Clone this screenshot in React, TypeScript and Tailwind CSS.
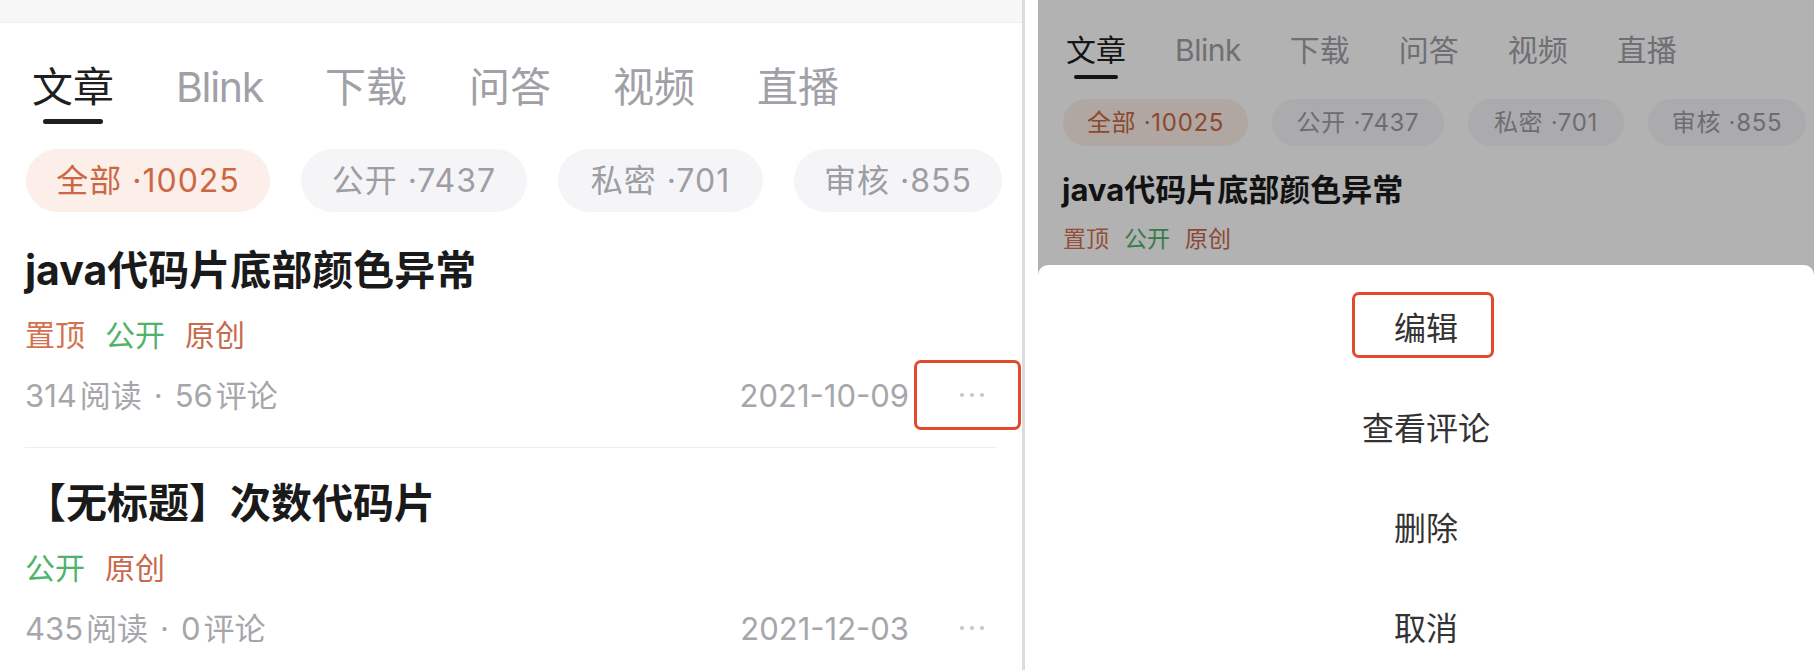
const font = "font-['Inter','Noto_Sans_CJK_SC',sans-serif]";

const tabs = ["文章", "Blink", "下载", "问答", "视频", "直播"];

const chips = [
  { label: "全部 ·10025", big: "w-[244px]", small: "w-[185px]", active: true },
  { label: "公开 ·7437", big: "w-[226px]", small: "w-[172px]", active: false },
  { label: "私密 ·701", big: "w-[205px]", small: "w-[156px]", active: false },
  { label: "审核 ·855", big: "w-[208px]", small: "w-[158px]", active: false },
];

const tagColor: Record<string, string> = {
  置顶: "text-[#d4714f]",
  公开: "text-[#4fb36a]",
  原创: "text-[#c8694d]",
};

const articles = [
  { title: "java代码片底部颜色异常", tags: ["置顶", "公开", "原创"], reads: 314, comments: 56, date: "2021-10-09", marked: true },
  { title: "【无标题】次数代码片", tags: ["公开", "原创"], reads: 435, comments: 0, date: "2021-12-03", marked: false },
];

const sheetItems = ["编辑", "查看评论", "删除", "取消"];

function Dots() {
  return (
    <div className="flex items-center gap-[6px]">
      <span className="w-[4px] h-[4px] rounded-full bg-[#c6c6cb]" />
      <span className="w-[4px] h-[4px] rounded-full bg-[#c6c6cb]" />
      <span className="w-[4px] h-[4px] rounded-full bg-[#c6c6cb]" />
    </div>
  );
}

function LeftPanel() {
  return (
    <div className="w-[1025px] h-full shrink-0 bg-white border-r-[3px] border-[#dcdcdc] flex flex-col">
      <div className="h-[23px] bg-[#f7f7f7] border-b border-[#efefef]" />

      {/* tabs */}
      <div className="mt-[44px] flex items-start gap-[62px] pl-[32px]">
        {tabs.map((t, i) => (
          <div key={t} className="flex flex-col items-center">
            <span className={`text-[41px] leading-none ${i === 1 ? "tracking-[-1.3px]" : ""} ${i === 0 ? "text-[#1f1f1f]" : "text-[#a0a0a6]"}`}>{t}</span>
            {i === 0 && <span className="mt-[11px] h-[5px] w-[60px] rounded-full bg-[#1f1f1f]" />}
          </div>
        ))}
      </div>

      {/* filter chips */}
      <div className="mt-[25px] flex gap-[31px] pl-[26px]">
        {chips.map((c) => (
          <div key={c.label}
            className={`${c.big} h-[63px] rounded-full flex items-center justify-center text-[32px] leading-none tracking-[1px] ${c.active ? "bg-[#fcefea] text-[#cb6843]" : "bg-[#f5f5f8] text-[#9d9da3]"}`}>
            {c.label}
          </div>
        ))}
      </div>

      {/* articles */}
      <div className="px-[25px] flex flex-col">
        {articles.map((a, i) => (
          <div key={a.title} className="flex flex-col">
            {i > 0 && <div className="mt-[37px] h-px bg-[#eeeeee]" />}
            <div className={`${i === 0 ? "mt-[38px]" : "mt-[35px]"} text-[41px] leading-none font-bold text-[#1a1a1a]`}>{a.title}</div>
            <div className="mt-[29px] flex gap-[20px] text-[30px] leading-none">
              {a.tags.map((t) => <span key={t} className={tagColor[t]}>{t}</span>)}
            </div>
            <div className="mt-[30px] h-[30px] flex items-center justify-between text-[31px] leading-none text-[#a6a6ab]">
              <span className="flex items-center">
                <span>{a.reads}</span>
                <span className="ml-[3px]">阅读</span>
                <span className="mx-[12px]">·</span>
                <span>{a.comments}</span>
                <span className="ml-[3px]">评论</span>
              </span>
              <div className="flex items-center">
                <span>{a.date}</span>
                <div className="relative ml-[51px] mr-[13px] h-[30px] flex items-center">
                  <Dots />
                  {a.marked && (
                    <div className="absolute left-[-46px] top-[-20px] w-[107px] h-[70px] rounded-[7px] border-[3px] border-[#e2492e]" />
                  )}
                </div>
              </div>
            </div>
          </div>
        ))}
      </div>
    </div>
  );
}

function RightPanel() {
  return (
    <div className="relative w-[776px] h-full shrink-0 bg-white overflow-hidden">
      <div className="flex flex-col">
        <div className="pt-[35px] flex items-start gap-[49px] pl-[28px]">
          {tabs.map((t, i) => (
            <div key={t} className="flex flex-col items-center">
              <span className={`text-[30px] leading-none ${i === 1 ? "tracking-[-0.5px]" : ""} ${i === 0 ? "text-[#1f1f1f]" : "text-[#a0a0a6]"}`}>{t}</span>
              {i === 0 && <span className="mt-[10px] h-[4px] w-[44px] rounded-full bg-[#1f1f1f]" />}
            </div>
          ))}
        </div>
        <div className="mt-[20px] flex gap-[24px] pl-[25px]">
          {chips.map((c) => (
            <div key={c.label}
              className={`${c.small} h-[47px] shrink-0 rounded-full flex items-center justify-center text-[24px] leading-none tracking-[0.7px] ${c.active ? "bg-[#fcefea] text-[#cb6843]" : "bg-[#f5f5f8] text-[#9d9da3]"}`}>
              {c.label}
            </div>
          ))}
        </div>
        <div className="mt-[28px] pl-[24px] text-[31px] leading-none font-bold text-[#1a1a1a]">{articles[0].title}</div>
        <div className="mt-[23px] pl-[25px] flex gap-[15px] text-[23px] leading-none">
          {articles[0].tags.map((t) => <span key={t} className={tagColor[t]}>{t}</span>)}
        </div>
      </div>

      {/* dim layer */}
      <div className="absolute inset-0 bg-black/30" />

      {/* action sheet */}
      <div className="absolute left-0 right-0 top-[265px] bottom-0 bg-white rounded-t-[10px] pt-[14px] flex flex-col">
        {sheetItems.map((s, i) => (
          <div key={s} className="h-[100px] shrink-0 flex items-center justify-center">
            <span className="relative text-[32px] leading-none text-[#333333]">
              {s}
              {i === 0 && (
                <span className="absolute left-[-42px] right-[-36px] top-[-21px] h-[66px] rounded-[7px] border-[3px] border-[#e2492e]" />
              )}
            </span>
          </div>
        ))}
      </div>
    </div>
  );
}

export default function App() {
  return (
    <div className={`w-[1814px] h-[670px] flex bg-white overflow-hidden ${font}`}>
      <LeftPanel />
      <div className="w-[13px] shrink-0 bg-white" />
      <RightPanel />
    </div>
  );
}
